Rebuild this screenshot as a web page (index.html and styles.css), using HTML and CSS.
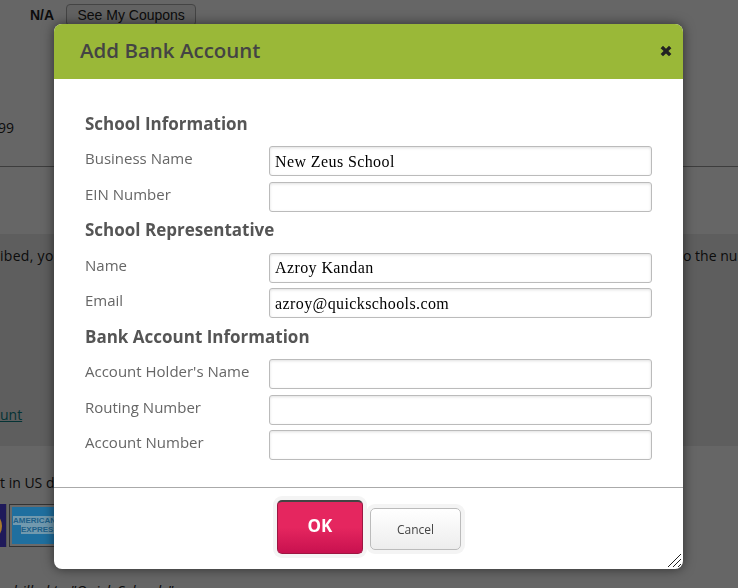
FILE: index.html
```html
<!DOCTYPE html>
<html lang="en">
<head>
    <meta charset="UTF-8">
    <meta name="viewport" content="width=device-width, initial-scale=1.0">
    <title>Add Bank Account</title>
    <link rel="stylesheet" href="styles.css">
</head>
<body>
    <div class="page">
        <div class="plan-row">
            <b class="plan-value">N/A</b>
            <button type="button" class="coupon-btn">See My Coupons</button>
        </div>
        <div class="price-row"><div class="price-clip"><span>$99</span></div></div>
        <div class="notice">
            <p class="notice-text"><span class="notice-left">ibed, yo</span><span class="notice-right">o the num</span></p>
            <a class="notice-link" href="#">unt</a>
        </div>
        <p class="currency">t in US d</p>
        <div class="cards">
            <div class="card-visa"><span class="card-dot"></span></div>
            <div class="card-amex">
                <span class="amex-top">AMERICAN</span>
                <span class="amex-bottom">EXPRESS</span>
            </div>
        </div>
        <p class="billed">billed to "Quick Schools"</p>
    </div>

    <div class="overlay"></div>

    <div class="dialog">
        <div class="dialog-head">
            <h2>Add Bank Account</h2>
            <svg class="dialog-close" width="12" height="12" viewBox="0 0 12 12">
                <path d="M3 .8 6 3.7 9 .8 11.4 3.2 8.4 6 11.4 8.9 9 11.3 6 8.4 3 11.3 .6 8.9 3.6 6 .6 3.2Z" fill="#222"/>
            </svg>
        </div>
        <form class="dialog-body">
            <h3>School Information</h3>
            <div class="form-row">
                <label for="business">Business Name</label>
                <input type="text" id="business" value="New Zeus School">
            </div>
            <div class="form-row">
                <label for="ein">EIN Number</label>
                <input type="text" id="ein">
            </div>
            <h3>School Representative</h3>
            <div class="form-row">
                <label for="repName">Name</label>
                <input type="text" id="repName" value="Azroy Kandan">
            </div>
            <div class="form-row">
                <label for="repEmail">Email</label>
                <input type="text" id="repEmail" value="azroy@quickschools.com">
            </div>
            <h3>Bank Account Information</h3>
            <div class="form-row">
                <label for="holder">Account Holder's Name</label>
                <input type="text" id="holder">
            </div>
            <div class="form-row">
                <label for="routing">Routing Number</label>
                <input type="text" id="routing">
            </div>
            <div class="form-row">
                <label for="account">Account Number</label>
                <input type="text" id="account">
            </div>
        </form>
        <div class="dialog-foot">
            <button type="button" class="btn-ok">OK</button>
            <button type="button" class="btn-cancel">Cancel</button>
        </div>
        <svg class="dialog-grip" width="14" height="14" viewBox="0 0 14 14">
            <path d="M0 13 13 0M5 13 13 5M10 13 13 10" stroke="#222" stroke-width="1" fill="none"/>
        </svg>
    </div>
</body>
</html>
```

FILE: styles.css
```css
html, body {
    margin: 0;
    height: 100%;
    overflow: hidden;
}
body {
    background: #fff;
    font-family: "Open Sans", Arial, sans-serif;
    color: #222;
}
p {
    margin: 0;
}

/* page behind the dialog */
.page {
    height: 588px;
    overflow: hidden;
}
.plan-row {
    display: flex;
    align-items: flex-start;
    gap: 12px;
    height: 114px;
    padding: 4px 0 0 30px;
}
.plan-value {
    font-size: 14px;
    line-height: 22px;
    font-family: "Liberation Sans", Arial, sans-serif;
}
.coupon-btn {
    width: 130px;
    height: 22px;
    padding: 0;
    background: #f4f4f4;
    border: 1px solid #aaa;
    border-radius: 4px;
    font: 14px "Liberation Sans", Arial, sans-serif;
    color: #222;
}
.price-row {
    height: 48px;
    border-bottom: 1px solid #999;
}
.price-clip {
    display: flex;
    justify-content: flex-end;
    width: 14px;
    overflow: hidden;
    font-size: 14px;
    line-height: 20px;
}
.price-clip span {
    flex: none;
}
.notice {
    height: 212px;
    box-sizing: border-box;
    margin-top: 67px;
    padding-top: 12px;
    background: #ececec;
    font-size: 14px;
}
.notice-text {
    display: flex;
    justify-content: space-between;
    line-height: 20px;
    white-space: nowrap;
}
.notice-left {
    width: 54px;
    overflow: hidden;
    letter-spacing: .3px;
}
.notice-right {
    width: 55px;
    overflow: hidden;
}
.notice-link {
    display: block;
    margin-top: 139px;
    line-height: 20px;
    color: #0a7f86;
}
.currency {
    margin-top: 27px;
    font-size: 14px;
    line-height: 20px;
    white-space: nowrap;
}
.cards {
    position: relative;
    z-index: 1;
    display: flex;
    gap: 2px;
    margin-top: 11px;
    height: 43px;
}
.card-visa {
    width: 7px;
    box-sizing: border-box;
    border-right: 1px solid #555;
    background: #1f1a5a;
    display: flex;
    align-items: center;
    overflow: hidden;
}
.card-dot {
    flex: none;
    width: 12px;
    height: 20px;
    margin-left: -10px;
    border-radius: 50%;
    background: #a87a2c;
}
.card-amex {
    width: 56px;
    box-sizing: border-box;
    border: 3px solid #6a6a6a;
    outline: 1px solid #333;
    outline-offset: -1px;
    background: #1f6f9f;
    padding-top: 9px;
    font: 700 8px/9px "Liberation Sans", Arial, sans-serif;
    color: #1d5f88;
    white-space: nowrap;
    overflow: hidden;
}
.amex-top, .amex-bottom {
    display: block;
    width: fit-content;
    background: #7199ae;
}
.amex-top {
    margin-left: 1px;
}
.amex-bottom {
    margin-left: 9px;
}
.billed {
    margin-top: 33px;
    padding-left: 13px;
    font: italic 15px "Open Sans", Arial, sans-serif;
    white-space: nowrap;
}

.overlay {
    position: fixed;
    inset: 0;
    background: rgba(0, 0, 0, .6);
}

/* dialog */
.dialog {
    position: fixed;
    z-index: 2;
    left: 54px;
    top: 24px;
    width: 629px;
    height: 545px;
    display: flex;
    flex-direction: column;
    background: #fff;
    border-radius: 8px;
    box-shadow: 0 0 12px rgba(0, 0, 0, .55);
    overflow: hidden;
}
.dialog-head {
    flex: none;
    height: 55px;
    display: flex;
    align-items: center;
    justify-content: space-between;
    padding: 0 11px 0 26px;
    background: #9ab838;
}
.dialog-head h2 {
    margin: -3px 0 0;
    font-size: 20.5px;
    font-weight: 600;
    color: #444;
}
.dialog-close {
    margin-top: -1px;
}
.dialog-body {
    flex: 1;
    padding: 31.75px 31px 0;
}
.dialog-body h3 {
    height: 35.5px;
    margin: 0;
    font-size: 17px;
    font-weight: 700;
    line-height: 25px;
    color: #555;
}
.form-row {
    display: flex;
    height: 35.5px;
}
.form-row label {
    width: 184px;
    font-size: 15px;
    line-height: 25px;
    color: #666;
}
.form-row input {
    width: 383px;
    height: 30px;
    box-sizing: border-box;
    padding: 1px 5px 0;
    background: #fff;
    border: 1px solid #bbb;
    border-radius: 3px;
    box-shadow: inset 0 1px 3px rgba(0, 0, 0, .12);
    font: 16px "Liberation Serif", serif;
    letter-spacing: .4px;
    color: #000;
}
.dialog-foot {
    flex: none;
    height: 82px;
    box-sizing: border-box;
    display: flex;
    align-items: flex-start;
    gap: 7px;
    padding: 12px 0 0 223px;
    border-top: 1px solid #aaa;
}
.btn-ok {
    width: 86px;
    height: 54px;
    padding: 0 0 4px;
    background: linear-gradient(#e5265f 50%, #c8114f);
    border: 1px solid #9c1642;
    border-top: 2px solid #444;
    border-radius: 5px;
    box-shadow: 0 0 0 4px #f4f4f4;
    font: 700 17px "Open Sans", Arial, sans-serif;
    color: #fff;
}
.btn-cancel {
    width: 91px;
    height: 42px;
    margin-top: 8px;
    background: linear-gradient(#fff, #ededed);
    border: 1px solid #bbb;
    border-radius: 5px;
    box-shadow: 0 0 0 4px #f4f4f4;
    font: 12px "Open Sans", Arial, sans-serif;
    color: #444;
}
.dialog-grip {
    position: absolute;
    right: 1px;
    bottom: 1px;
}
```
